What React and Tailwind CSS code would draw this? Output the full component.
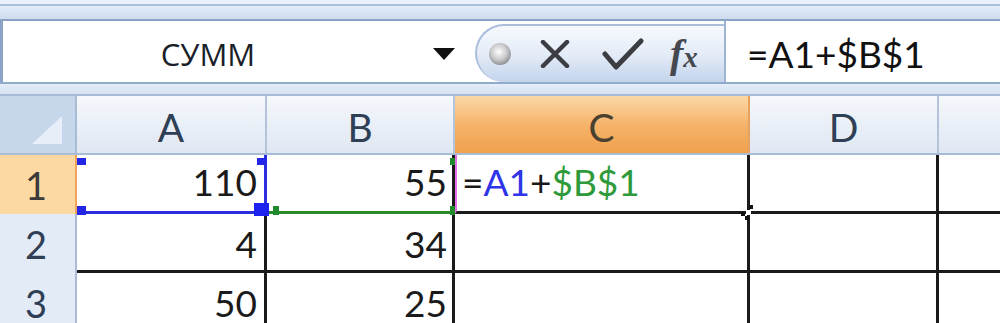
const cellFont = { fontFamily: 'Lato, "Open Sans", sans-serif' }

function Square({ className }) {
  return <div className={`absolute ${className}`} />
}

function ColHead({ w, label, active }) {
  return (
    <div
      className={`${w} h-full flex items-center justify-center border-r-2 text-[39px] leading-none ${
        active
          ? 'bg-gradient-to-b from-[#fbd8a6] via-[#f6b46a] to-[#f0a04c] border-[#e6a060] text-[#4a4030]'
          : 'bg-gradient-to-b from-[#f5f8fc] to-[#dfe7f2] border-[#b3c4da] text-[#2f3f55]'
      }`}
    >
      <span className="pt-[6px]">{label}</span>
    </div>
  )
}

function RowHead({ n, active }) {
  return (
    <div
      className={`w-[77px] h-full flex items-end justify-center pb-[10px] border-r-2 text-[38px] leading-none ${
        active ? 'bg-[#fcd8a2] border-[#eea45c] text-[#3a3a3a]' : 'bg-[#e3ebf6] border-[#aabcd5] text-[#2f3f55]'
      }`}
    >
      <span className="pr-[3px]">{n}</span>
    </div>
  )
}

export default function App() {
  return (
    <div className="w-[1000px] h-[323px] overflow-hidden bg-white" style={cellFont}>
      {/* ribbon bottom */}
      <div className="h-[4px] bg-[#eaf1fa]" />
      <div className="h-[2px] bg-[#a9bfdb]" />
      <div className="h-[13px] bg-gradient-to-b from-[#e2ebf7] to-[#cfdcef]" />
      <div className="h-[2px] bg-[#8aa3c6]" />

      {/* formula bar */}
      <div className="h-[61px] flex bg-white">
        <div className="w-[475px] h-full flex items-center border-l-[3px] border-[#8aa3c6]">
          <div
            className="w-[400px] text-center text-[31px] leading-none text-[#1a1f2a] pt-[6px] pl-[10px]"
            style={{ fontFamily: '"Open Sans", "Noto Sans", sans-serif' }}
          >
            СУММ
          </div>
          <svg width="22" height="12" viewBox="0 0 22 12" className="ml-[30px] mt-[4px]">
            <polygon points="0,0 22,0 11,12" fill="#111" />
          </svg>
        </div>
        <div className="w-[249px] h-[58px] mt-[3px] rounded-l-full border-l-2 border-t-2 border-[#a9bedc] bg-gradient-to-b from-[#f6f9fd] via-[#e4ecf7] to-[#c3d4ec] flex items-center">
          <svg width="26" height="26" viewBox="0 0 26 26" className="ml-[10px]">
            <defs>
              <radialGradient id="g" cx="0.45" cy="0.4" r="0.6">
                <stop offset="0" stopColor="#ffffff" />
                <stop offset="0.6" stopColor="#c9c9cb" />
                <stop offset="1" stopColor="#8e9094" />
              </radialGradient>
            </defs>
            <circle cx="13" cy="13" r="11" fill="url(#g)" />
          </svg>
          <svg width="30" height="28" viewBox="0 0 30 28" className="ml-[27px]">
            <path d="M3 2 L27 26 M27 2 L3 26" stroke="#3b3d42" strokeWidth="4.5" strokeLinecap="round" />
          </svg>
          <svg width="42" height="32" viewBox="0 0 42 32" className="ml-[32px]">
            <path d="M3 16 L14 29 L39 3" stroke="#3b3d42" strokeWidth="5" fill="none" strokeLinecap="round" strokeLinejoin="round" />
          </svg>
          <div
            className="ml-[26px] italic font-bold text-[#45484f] leading-none"
            style={{ fontFamily: '"Liberation Serif", serif' }}
          >
            <span className="text-[40px]">f</span>
            <span className="text-[29px]">x</span>
          </div>
        </div>
        <div className="w-[2px] h-full bg-[#9fb4d2]" />
        <div className="flex-1 h-full flex items-center pl-[21px] pt-[4px] text-[37px] leading-none text-[#111]">
          =A1+$B$1
        </div>
      </div>
      <div className="h-[2px] bg-[#93abcb]" />
      <div className="h-[10px] bg-gradient-to-b from-[#e4edf8] to-[#d6e2f2]" />
      <div className="h-[2px] bg-[#a8bcd7]" />

      {/* column headers */}
      <div className="h-[59px] flex border-b-2 border-[#a9bcd5]">
        <div className="w-[77px] h-full bg-[#c6d6eb] border-r-2 border-[#aabcd5] flex items-end justify-end pr-[13px] pb-[9px]">
          <svg width="30" height="28" viewBox="0 0 30 28">
            <polygon points="30,0 30,28 0,28" fill="#e8eef7" />
          </svg>
        </div>
        <ColHead w="w-[190px]" label="A" />
        <ColHead w="w-[188px]" label="B" />
        <ColHead w="w-[295px]" label="C" active />
        <ColHead w="w-[189px]" label="D" />
        <div className="flex-1 h-full bg-gradient-to-b from-[#f5f8fc] to-[#dfe7f2]" />
      </div>

      {/* row 1 */}
      <div className="h-[59px] flex text-[37px] leading-none text-[#1a1a1a]">
        <RowHead n="1" active />
        <div className="relative w-[190px] h-full flex items-end justify-end pr-[7px] pb-[11px] border-r-[3px] border-b-[3px] border-[#2a2ee0]">
          110
          <Square className="left-0 top-[3px] w-[9px] h-[7px] bg-[#2326e6]" />
          <Square className="left-0 bottom-[-4px] w-[9px] h-[9px] bg-[#2326e6]" />
          <Square className="right-[-3px] top-[3px] w-[10px] h-[7px] bg-[#2326e6]" />
          <Square className="right-[-5px] bottom-[-5px] w-[15px] h-[13px] bg-[#1d22ee] z-10" />
        </div>
        <div className="relative w-[188px] h-full flex items-end justify-end pr-[5px] pb-[11px] border-r-[3px] border-b-[3px] border-r-[#1a1a1a] border-b-[#2a8a2a]">
          55
          <Square className="left-[6px] bottom-[-4px] w-[6px] h-[9px] bg-[#1f8a2a]" />
          <Square className="right-[-3px] top-[3px] w-[5px] h-[7px] bg-[#1f8a2a]" />
          <Square className="right-[-3px] bottom-[-4px] w-[5px] h-[9px] bg-[#1f8a2a]" />
        </div>
        <div className="relative w-[295px] h-full flex items-end pl-[5px] pb-[11px] border-l-2 border-l-[#e46ee6] border-r-[3px] border-b-[3px] border-r-[#1a1a1a] border-b-[#1a1a1a]">
          <span>=</span>
          <span className="text-[#2f34e8]">A1</span>
          <span>+</span>
          <span className="text-[#2f9a3c]">$B$1</span>
          <Square className="right-[-4px] bottom-[-4px] w-[5px] h-[5px] bg-white" />
          <Square className="right-[2px] bottom-[-5px] w-[4px] h-[4px] bg-[#111]" />
          <Square className="right-[-6px] bottom-[2px] w-[4px] h-[4px] bg-[#111]" />
          <Square className="right-[-2px] bottom-[-9px] w-[4px] h-[4px] bg-[#111]" />
        </div>
        <div className="w-[189px] h-full border-r-[3px] border-b-[3px] border-[#1a1a1a]" />
        <div className="flex-1 h-full border-b-[3px] border-[#1a1a1a]" />
      </div>

      {/* rows 2-3 */}
      {[
        ['2', '4', '34'],
        ['3', '50', '25'],
      ].map(([n, a, b]) => (
        <div key={n} className="h-[59px] flex text-[37px] leading-none text-[#1a1a1a]">
          <RowHead n={n} />
          <div className="w-[190px] h-full flex items-end justify-end pr-[7px] pb-[8px] border-r-[3px] border-b-[3px] border-[#1a1a1a]">
            {a}
          </div>
          <div className="w-[188px] h-full flex items-end justify-end pr-[5px] pb-[8px] border-r-[3px] border-b-[3px] border-[#1a1a1a]">
            {b}
          </div>
          <div className="w-[295px] h-full border-r-[3px] border-b-[3px] border-[#1a1a1a]" />
          <div className="w-[189px] h-full border-r-[3px] border-b-[3px] border-[#1a1a1a]" />
          <div className="flex-1 h-full border-b-[3px] border-[#1a1a1a]" />
        </div>
      ))}
    </div>
  )
}
